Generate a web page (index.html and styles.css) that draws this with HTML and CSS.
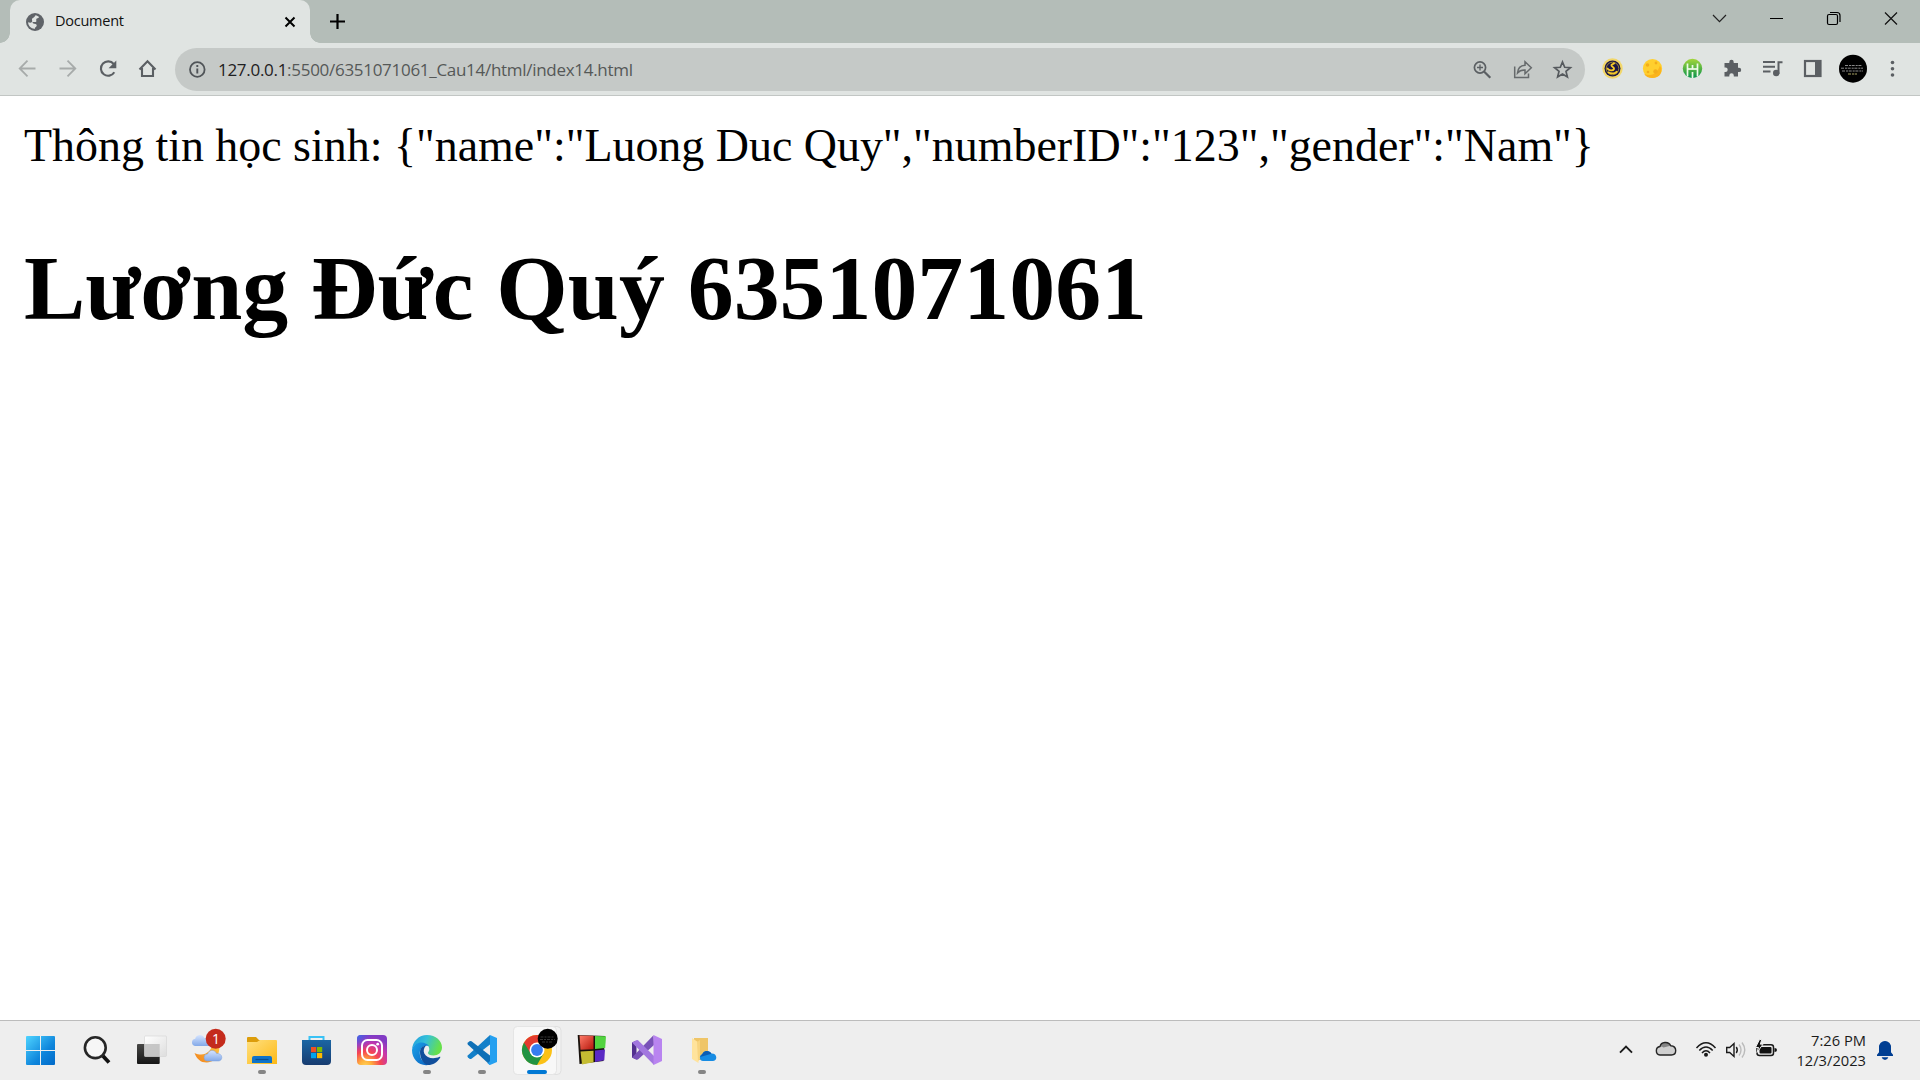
FILE: index.html
```html
<!DOCTYPE html>
<html lang="vi">
<head>
<meta charset="utf-8">
<title>Document</title>
<link rel="stylesheet" href="styles.css">
</head>
<body>
<header class="tabstrip">
  <div class="tab">
    <svg class="favicon" width="18" height="18" viewBox="0 0 18 18"><circle cx="9" cy="9" r="9" fill="#5f6368"/><path d="M9.500 2.200c1.500.300 2.600.900 3.600 1.900-.4 1.400-2.500 1-2.900 2.300-.2 1 .6 1.300.1 2.100-.6.900-2.300.4-3.500.5-.8.700.2 1.600 1.500 1.700 2 .1 2.800 1 2.300 2.300-.5 1-1.700 1.200-1.900 2.900C4.800 15.600 2.200 12.600 2.100 9.300c1.700.6 3.300.600 4-.6.500-1.200-.6-1.800 0-3 .7-1.200 2.600-1.300 3.400-3.500z" fill="#e0e4e2"/></svg>
    <span class="tab-title">Document</span>
    <svg width="12" height="12" viewBox="0 0 12 12"><path d="M1.500 1.500l9 9M10.500 1.500l-9 9" stroke="#000" stroke-width="2"/></svg>
  </div>
  <svg class="new-tab" width="15" height="15" viewBox="0 0 15 15"><path d="M7.500 0v15M0 7.500h15" stroke="#000" stroke-width="2.200"/></svg>
  <div class="window-controls">
    <svg width="57" height="43" viewBox="0 0 57 43"><path d="M21 15l6.500 6.700L34 15" fill="none" stroke="#222" stroke-width="1.200"/></svg>
    <svg width="57" height="43" viewBox="0 0 57 43"><path d="M21 18.500h13" stroke="#000"/></svg>
    <svg width="57" height="43" viewBox="0 0 57 43"><g fill="none" stroke="#000" stroke-width="1.200"><rect x="21.500" y="14.500" width="10" height="10" rx="1.500"/><path d="M24 12.500h7q3 0 3 3V22"/></g></svg>
    <svg width="57" height="43" viewBox="0 0 57 43"><path d="M22 12.500l12 12M34 12.500l-12 12" stroke="#111" stroke-width="1.200"/></svg>
  </div>
</header>
<nav class="toolbar">
  <svg class="btn" viewBox="0 0 40 52"><path d="M27.500 25.500H12M19.500 17.700L11.700 25.500l7.800 7.800" fill="none" stroke="#a7abaa" stroke-width="1.800"/></svg>
  <svg class="btn" viewBox="0 0 40 52"><path d="M11.500 25.500H27M19.500 17.700l7.800 7.800-7.800 7.800" fill="none" stroke="#a7abaa" stroke-width="1.800"/></svg>
  <svg class="btn" viewBox="0 0 40 52"><path d="M26.300 29.300A7.200 7.200 0 1 1 25.700 21" fill="none" stroke="#5b5f63" stroke-width="2.100"/><path d="M28.300 17.500v7.700h-7.700z" fill="#5b5f63"/></svg>
  <svg class="btn" viewBox="0 0 40 52"><path d="M14 25v8h11v-8M11.500 26.500l8-8.300 8 8.300" fill="none" stroke="#5b5f63" stroke-width="2.100"/></svg>
  <div class="omnibox">
    <svg width="43" height="43" viewBox="0 0 43 43"><circle cx="22.300" cy="21.500" r="7.300" fill="none" stroke="#505458" stroke-width="1.800"/><path d="M22.300 20.500v5M22.300 17v2" stroke="#505458" stroke-width="1.900"/></svg>
    <span class="url"><span class="host">127.0.0.1</span>:5500/6351071061_Cau14/html/index14.html</span>
    <svg class="action" viewBox="0 0 40 43"><g fill="none" stroke="#5b5f63"><circle cx="18" cy="19.500" r="5.600" stroke-width="1.700"/><path d="M22 23.500l6.300 6.300" stroke-width="2.200"/><path d="M18 16.500v6M15 19.500h6" stroke-width="1.300"/></g></svg>
    <svg class="action" viewBox="0 0 40 43"><g fill="none" stroke="#666a6c" stroke-width="1.500"><path d="M12.700 18.500v11H26.500v-4"/><path d="M15.500 25c.4-5 3-7.500 7.500-7.700v-3.500l6.300 6-6.300 6v-3.700c-3.300-.1-5.800.8-7.500 2.900z"/></g></svg>
    <svg class="action" viewBox="0 0 40 43"><path d="M20.500 14l2.200 5.300 5.700.4-4.400 3.700 1.400 5.600-4.900-3-4.900 3 1.400-5.600-4.400-3.700 5.700-.4z" fill="none" stroke="#565a5e" stroke-width="1.700"/></svg>
  </div>
  <div class="extensions">
    <svg class="btn" viewBox="0 0 40 52"><circle cx="20.500" cy="25.500" r="10.200" fill="#f2d76a"/><circle cx="20.500" cy="25.500" r="8" fill="#1c1745"/><circle cx="20.500" cy="25.500" r="6.300" fill="none" stroke="#9a8434"/><path d="M15 25c2 3 6 3 7 1 .8-2-3-2-2.600-4 .4-1.200 2.300-.7 3.100-2.200M16 29c3 2 8 2 9-1" fill="none" stroke="#f5ca27" stroke-width="1.900"/></svg>
    <svg class="btn" viewBox="0 0 40 52"><circle cx="20.500" cy="25.500" r="9.600" fill="#ffcf2e"/><path d="M12 30.500c6 3.500 13 1 16-8 4 7-1 12.600-7.500 12.600-4 0-7-1.700-8.500-4.600z" fill="#fbb41c"/><g fill="#f3ae1b"><circle cx="15.500" cy="22" r="1.800"/><circle cx="24" cy="20" r="1.400"/><circle cx="23.500" cy="28.500" r="2.200"/><circle cx="16" cy="29" r="1.300"/></g></svg>
    <svg class="btn" viewBox="0 0 40 52"><defs><linearGradient id="gr" x2="0" y2="1"><stop stop-color="#a4d63b"/><stop offset="1" stop-color="#07934c"/></linearGradient></defs><circle cx="20.500" cy="25.500" r="9.700" fill="url(#gr)"/><path d="M15.500 20.500v13M20.500 22v4M20.500 29v6.500M25.500 20.500v13" stroke="#effbe9" stroke-width="1.700"/><path d="M15.500 26h10" stroke="#effbe9" stroke-width="1.700"/></svg>
    <svg class="btn" viewBox="0 0 40 52"><path d="M13 20h4.300v-1a2.200 2.200 0 0 1 4.400 0v1H26v4.700h1a2.200 2.200 0 0 1 0 4.400h-1v4.400h-4.200v-1a2.200 2.200 0 0 0-4.500 0v1H12.500v-4.600h1a2.200 2.200 0 0 0 0-4.400h-1V20z" fill="#5b5f63"/></svg>
    <svg class="btn" viewBox="0 0 40 52"><path d="M11 19h12M11 23.700h12M11 28.500h7.500M26.500 31V19.200h4" fill="none" stroke="#5b5f63" stroke-width="2"/><circle cx="24.200" cy="30" r="3.200" fill="#5b5f63"/></svg>
    <svg class="btn" viewBox="0 0 40 52"><rect x="13" y="18" width="15.500" height="15" fill="none" stroke="#5b5f63" stroke-width="2.200"/><path d="M23 17h6v17h-6z" fill="#5b5f63"/></svg>
    <svg class="btn" viewBox="0 0 40 52"><circle cx="21" cy="25.700" r="14" fill="#000"/><g stroke="#888" stroke-width="1" stroke-dasharray="3 1 2 .7"><path d="M13 22.500h17M9 25.200h22M10 28h21"/><path d="M16 31h9" stroke="#aaa465"/></g></svg>
    <svg class="btn" viewBox="0 0 40 52"><g fill="#5b5f63"><circle cx="20.500" cy="19.500" r="1.800"/><circle cx="20.500" cy="25.700" r="1.800"/><circle cx="20.500" cy="32" r="1.800"/></g></svg>
  </div>
</nav>
<main class="page">
  <p class="info">Thông tin học sinh: {"name":"Luong Duc Quy","numberID":"123","gender":"Nam"}</p>
  <h1 class="student">Lương Đức Quý 6351071061</h1>
</main>
<footer class="taskbar">
  <div class="apps">
    <svg class="app" viewBox="0 0 55 59"><defs><linearGradient id="win" x2="1" y2="1"><stop stop-color="#4fd4ff"/><stop offset=".6" stop-color="#0f86dc"/><stop offset="1" stop-color="#0069c8"/></linearGradient></defs><path d="M13 15h13v14H12V16q0-1 1-1zM27 15h13q1 0 1 1v13H27zM12 30h14v14H13q-1 0-1-1zM27 30h14v13q0 1-1 1H27z" fill="url(#win)"/></svg>
    <svg class="app" viewBox="0 0 55 59"><circle cx="26.300" cy="26.700" r="10.400" fill="#f6f6f6" stroke="#262626" stroke-width="2.600"/><path d="M34 35l6 6.500" stroke="#111" stroke-width="3.800"/></svg>
    <svg class="app" viewBox="0 0 55 59"><defs><linearGradient id="tv" x2="0" y2="1"><stop stop-color="#484846"/><stop offset="1" stop-color="#161616"/></linearGradient><linearGradient id="tl" x2="1" y2="1"><stop stop-color="#fff"/><stop offset="1" stop-color="#ddd"/></linearGradient></defs><rect x="13" y="23" width="22.700" height="20" rx="1" fill="url(#tv)"/><rect x="20.500" y="15" width="22" height="20.500" rx="1" fill="url(#tl)" stroke="#d4d4d4" stroke-width=".6"/><path d="M20.500 23h15.200v12.500H20.500z" fill="#bbb" opacity=".8"/></svg>
    <svg class="app" viewBox="0 0 55 59"><defs><linearGradient id="mo" x1="1" x2="0" y2="1"><stop stop-color="#ffd04a"/><stop offset="1" stop-color="#f28119"/></linearGradient><linearGradient id="cl" x2="0" y2="1"><stop stop-color="#d5e4ff"/><stop offset="1" stop-color="#83a9e8"/></linearGradient></defs><path d="M39 18c4 12-1 23-11 23.500-6 .2-10-3-12.500-9.500 9 4 17 0 19-12z" fill="url(#mo)"/><path d="M16 25a3.700 3.700 0 0 1 .2-7.300c1-4.600 7.500-5 9.200-.8 3 0 4.600 2 4.600 8z" fill="url(#cl)"/><path d="M28.500 40a3.500 3.500 0 0 1 .2-7c1-4.300 7-4.800 8.800-.6 3 0 5.300 1.300 5.300 4 0 2-1.400 3.600-3.300 3.600z" fill="url(#cl)" stroke="#7ba0dd" stroke-width=".5"/><circle cx="36.700" cy="17.700" r="10" fill="#c42b1c"/><text x="37" y="23" class="badge">1</text></svg>
    <svg class="app" viewBox="0 0 55 59"><defs><linearGradient id="fo" x2="1" y2="1"><stop stop-color="#ffe080"/><stop offset="1" stop-color="#fdb915"/></linearGradient></defs><path d="M13 17q0-1 1-1h8l3 3h16v5H13z" fill="#dc9d0b"/><path d="M13 21h10l3-2h16q1 0 1 1v23H13z" fill="url(#fo)"/><path d="M18 42v-5q0-2 2-2h16q2 0 2 2v5z" fill="#0f73c9"/><path d="M21.500 38.500h13" stroke="#084f91" stroke-width="1.200"/><rect x="24" y="49" width="8" height="4" rx="2" fill="#858585"/></svg>
    <svg class="app" viewBox="0 0 55 59"><defs><linearGradient id="st" x2="0" y2="1"><stop stop-color="#1b66a4"/><stop offset="1" stop-color="#173c70"/></linearGradient></defs><path d="M20.500 20v-4h14v4" fill="none" stroke="#39c2f5" stroke-width="2"/><path d="M13 19h29v21q0 4-4 4H17q-4 0-4-4z" fill="url(#st)"/><path d="M22 26h5.200v5.200H22z" fill="#f25022"/><path d="M28 26h5.200v5.200H28z" fill="#7fba00"/><path d="M22 32h5.200v5.200H22z" fill="#00a4ef"/><path d="M28 32h5.200v5.200H28z" fill="#ffb900"/></svg>
    <svg class="app" viewBox="0 0 55 59"><defs><radialGradient id="ig" cx=".28" cy="1.050" r="1.050"><stop stop-color="#ffd55a"/><stop offset=".2" stop-color="#ffb03b"/><stop offset=".48" stop-color="#f54552"/><stop offset=".75" stop-color="#c837ab"/><stop offset="1" stop-color="#823bc4"/></radialGradient><radialGradient id="ib" cx="0" cy="0" r=".55"><stop stop-color="#3771e8"/><stop offset="1" stop-color="#5a3be0" stop-opacity="0"/></radialGradient></defs><rect x="13" y="14" width="30" height="30" rx="4" fill="url(#ig)"/><rect x="13" y="14" width="30" height="30" rx="4" fill="url(#ib)"/><g fill="none" stroke="#fff" stroke-width="2"><rect x="18" y="19" width="20" height="20" rx="5.500"/><circle cx="28" cy="29" r="5"/></g><circle cx="33.700" cy="23.200" r="1.400" fill="#fff"/></svg>
    <svg class="app" viewBox="0 0 55 59"><defs><linearGradient id="e1" x2="1" y2=".3"><stop stop-color="#1f9be0"/><stop offset=".5" stop-color="#35c1d8"/><stop offset="1" stop-color="#66e04c"/></linearGradient><linearGradient id="e2" x2="1" y2="1"><stop stop-color="#1ca3e8"/><stop offset="1" stop-color="#0960c0"/></linearGradient></defs><path d="M13 29C13.500 20 20 14 28 14c9 0 15 6 15 12.500 0 5-4 8-8.500 8-3.500 0-5.500-1.200-5.500-2.500 0-1 1.300-1.500 1.300-3.700C30.300 24 26 22 22.500 22 18 22 14 25 13 29z" fill="url(#e1)"/><path d="M13 29c1-5 5-7.500 9.500-7.500 3 0 6 1.300 7.300 3.500-5-1.500-9 2-9 7 0 6 4 11 10 11.700C21 46 13 39 13 29z" fill="url(#e2)"/><path d="M21 31c0-3.500 2.500-6.200 6-6.500-2 2-3 5-1.700 8 2.400 5 9.700 6 15.200 3.300 1-.4 1 .4.500 1.200C38 41.500 34 44 29 44c-5-1-8-7-8-13z" fill="#114f9c"/><rect x="24" y="49" width="8" height="4" rx="2" fill="#858585"/></svg>
    <svg class="app" viewBox="0 0 55 59"><path d="M36 14L14 34.300q-1.300 1.200 0 2.300l1.500 1.200q1 .6 2 0L36 23.500z" fill="#1480c9"/><path d="M36 44L14 23.700q-1.300-1.200 0-2.300l1.500-1.200q1-.6 2 0L36 34.500z" fill="#0e70b7"/><path d="M36 14l7 3v24l-7 3-2.500-1.500L36 40z" fill="#25a0f0"/><rect x="24" y="49" width="8" height="4" rx="2" fill="#858585"/></svg>
    <svg class="app" viewBox="0 0 55 59"><rect x="4.500" y="5.500" width="47.500" height="48" rx="4" fill="#f2f2f2" stroke="#e0e0e0"/><rect x="4.500" y="5.500" width="43" height="48" rx="4" fill="#f8f8f8" stroke="#e5e5e5"/><circle cx="28" cy="29" r="15" fill="#fbc116"/><path d="M28 29L15 21.500A15 15 0 0 0 28 44l6.500-11.300z" fill="#229342"/><path d="M15 21.500A15 15 0 0 1 41 21.500H28l-6.300 11z" fill="#e33b2e"/><circle cx="28" cy="29" r="7.500" fill="#fff"/><circle cx="28" cy="29" r="5.900" fill="#367df0"/><circle cx="38.700" cy="17.700" r="10" fill="#000"/><path d="M31.500 16h13M31 18.500h15M33 21h11" stroke="#363636" stroke-dasharray="3 1 2 1"/><rect x="18" y="49" width="20" height="4" rx="2" fill="#0078d4"/></svg>
    <svg class="app" viewBox="0 0 55 59"><defs><linearGradient id="rd" x2="1" y2="1"><stop stop-color="#ff7b68"/><stop offset="1" stop-color="#b5160c"/></linearGradient></defs><path d="M13.700 14L41 15l-1.500 25L15.500 43z" fill="#17110c"/><path d="M15.500 14.500l14 .2v13.500l-13 .6z" fill="url(#rd)"/><path d="M31 15l11 .3-.8 11.700L31 28z" fill="#52d340"/><path d="M16.500 30.500l13-.8v11.500L18 43.500z" fill="#c5bd32"/><path d="M31 29.500l10-1-.7 10.800L31 41z" fill="#5a29c4"/></svg>
    <svg class="app" viewBox="0 0 55 59"><path d="M13 21.500l4.500-2V38.500l-4.500-2z" fill="#52308f"/><path d="M13 36.500l21.500-22.300L35 24 19.500 38q-1.200 1.200-2.500.4z" fill="#7952b8"/><path d="M17.500 19.300q1.300-.6 2.300.6L35 35v9L13 21.500z" fill="#a277df"/><path d="M34.500 14l8.500 4v22l-8.500 4z" fill="#b984f0"/></svg>
    <svg class="app" viewBox="0 0 55 59"><path d="M20 17h14v22H20z" fill="#efc567"/><path d="M18 17l6.500 4.500V42L18 38z" fill="#ffe39c"/><path d="M23 21l3-2v19l-2 2z" fill="#f8d47f"/><path d="M29 40a3.500 3.500 0 0 1-.7-6.800c1.500-4 7-4.500 9-.7 3-.2 5 1.500 5 4 0 2-1.500 3.500-3.500 3.500z" fill="#178ce3"/><path d="M26 36l3-4c2-3 7-2.500 8.500.7z" fill="#0c5db3"/><rect x="24" y="49" width="8" height="4" rx="2" fill="#858585"/></svg>
  </div>
  <div class="tray">
    <svg width="40" height="59" viewBox="0 0 40 59"><path d="M14 31.700l6-6.200 6 6.200" fill="none" stroke="#1b1b1b" stroke-width="1.900"/></svg>
    <svg width="45" height="59" viewBox="0 0 45 59"><g transform="translate(-.5 0)"><path d="M14.500 34a4.300 4.300 0 0 1 0-8.500c1-4.800 8.500-5.700 10.700-.8 3.300.2 5 2 5 4.800 0 2.600-1.700 4.500-4.300 4.500z" fill="#cfcfcf"/><path d="M11 28c2-3 5-3 7-1.500l7-1.700c-2-5-9-4-10.500.7-2 .3-3 1.300-3.500 2.500z" fill="#858585"/><path d="M14.500 34a4.300 4.300 0 0 1 0-8.500c1-4.800 8.500-5.700 10.700-.8 3.300.2 5 2 5 4.800 0 2.600-1.700 4.500-4.300 4.500z" fill="none" stroke="#252525" stroke-width="1.400"/></g></svg>
    <svg width="30" height="59" viewBox="0 0 30 59"><g fill="none" stroke="#1a1a1a" stroke-width="1.500"><path d="M5.500 27q9.500-10.500 19 0M8.300 29.500q6.700-7 13.400 0M11 32q4-4.300 8 0"/></g><circle cx="15" cy="33.800" r="2" fill="#1a1a1a"/></svg>
    <svg width="30" height="59" viewBox="0 0 30 59"><g fill="none" stroke="#1a1a1a" stroke-width="1.400"><path d="M5.700 26.500h3l4.300-4v13l-4.300-4h-3zM15.300 26q2 3 0 6"/></g><g fill="none" stroke="#bbb" stroke-width="1.400"><path d="M18 23.500q4 5.500 0 11M21 21.500q5.500 7.500 0 15"/></g></svg>
    <svg width="30" height="59" viewBox="0 0 30 59"><rect x="6" y="23.700" width="16.500" height="10.800" rx="2.500" fill="none" stroke="#1a1a1a" stroke-width="1.500"/><rect x="8.500" y="26" width="12" height="6.500" rx="1" fill="#111"/><path d="M23.500 27q2.500 0 2.500 2t-2.500 2z" fill="#111"/><path d="M8.500 18.500L4.500 26.500h3L6 31.500l6-8.300H9.300l1.500-4.700z" fill="#111" stroke="#eee"/></svg>
    <div class="clock"><span>7:26 PM</span><span class="date">12/3/2023</span></div>
    <svg width="34" height="59" viewBox="0 0 34 59"><path d="M11 35v-1.200l2-2.500V27a6 6.500 0 0 1 12 0v4.300l2 2.500V35z" fill="#003e92"/><path d="M13 30v-4a6 6 0 0 1 12 0v4z" fill="#003e92"/><path d="M15.700 36.300h6.600q-.7 2.700-3.300 2.700t-3.300-2.700z" fill="#003e92"/></svg>
  </div>
</footer>
</body>
</html>
```
FILE: styles.css
```css
* { box-sizing: border-box; }
body { margin: 0; width: 1920px; height: 1080px; display: flex; flex-direction: column; overflow: hidden; background: #fff; font-family: "Open Sans", "Noto Sans", sans-serif; }
svg { display: block; flex: none; }

.tabstrip { height: 43px; flex: none; display: flex; align-items: center; padding-left: 10px; background: #b4bdb8; }
.tab { position: relative; width: 300px; height: 43px; padding: 0 14px 0 16px; display: flex; align-items: center; border-radius: 10px 10px 0 0; background: #e0e4e2; }
.tab::before, .tab::after { content: ""; position: absolute; bottom: 0; width: 10px; height: 10px; }
.tab::before { left: -10px; background: radial-gradient(circle at 0 0, transparent 9.500px, #e0e4e2 10px); }
.tab::after { right: -10px; background: radial-gradient(circle at 100% 0, transparent 9.500px, #e0e4e2 10px); }
.tab-title { flex: 1; margin: -2px 0 0 11px; font-size: 14.500px; line-height: 20px; letter-spacing: -.25px; color: #111; }
.new-tab { margin-left: 20px; }
.window-controls { margin-left: auto; display: flex; }

.toolbar { height: 53px; flex: none; display: flex; align-items: center; padding: 0 8px; background: #e0e4e2; border-bottom: 1px solid #c2c6c4; }
.btn { width: 40px; height: 52px; }
.omnibox { width: 1410px; height: 43px; margin: 0 7px; padding-right: 3px; display: flex; align-items: center; border-radius: 22px; background: #c5c9c7; }
.url { flex: 1; padding-top: 1px; font-size: 17px; line-height: 24px; letter-spacing: -.29px; color: #555857; white-space: nowrap; }
.host { color: #1e2021; }
.action { width: 40px; height: 43px; }
.extensions { display: flex; }

.page { flex: 1; padding: 24px; font-family: "Liberation Serif", "Times New Roman", serif; color: #000; }
.info { margin: 0; font-size: 45.930px; line-height: 52px; white-space: nowrap; }
.student { margin: 63px 0 0; font-size: 91.850px; line-height: 106px; white-space: nowrap; }

.taskbar { height: 60px; flex: none; display: flex; justify-content: space-between; padding: 0 20px 0 14px; background: #eee; border-top: 1px solid #bcbcbc; }
.apps, .tray { display: flex; }
.app { width: 55px; height: 59px; }
.badge { font: 14px "Open Sans", sans-serif; fill: #fff; text-anchor: middle; }
.clock { width: 85px; padding-top: 9px; display: flex; flex-direction: column; align-items: flex-end; font-size: 14.700px; line-height: 20px; color: #1b1b1b; }
```
